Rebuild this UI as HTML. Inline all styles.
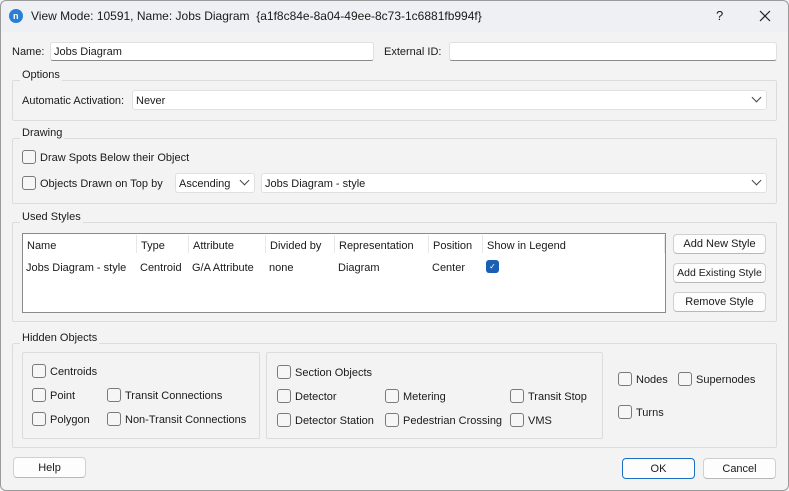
<!DOCTYPE html>
<html><head><meta charset="utf-8"><style>
*{box-sizing:border-box;margin:0;padding:0}
body{width:789px;height:491px;overflow:hidden;background:#f3f3f3;font-family:"Liberation Sans",sans-serif;font-size:11px;color:#1a1a1a;position:relative}
.a{position:absolute}
.t{position:absolute;line-height:14px;white-space:nowrap;margin-top:1px}
.in{position:absolute;background:#fff;border:1px solid #e0e0e0;border-bottom:1px solid #8a8a8a;border-radius:3px}
.g{position:absolute;border:1px solid #dcdcdc;border-radius:2px}
.gt{position:absolute;background:#f3f3f3;padding:0 2px;line-height:14px;margin-top:1px}
.cb{position:absolute;width:14px;height:14px;border:1px solid #7a7a7a;border-radius:3px;background:#f6f6f6}
.btn{position:absolute;background:#fdfdfd;border:1px solid #d0d0d0;border-bottom-color:#b8b8b8;border-radius:4px;text-align:center;line-height:20px}
.ch{position:absolute;width:7px;height:7px;border-right:1.2px solid #444;border-bottom:1.2px solid #444;transform:rotate(45deg)}
.sep{position:absolute;top:235px;width:1px;height:18px;background:#e8e8e8}
</style></head><body>
<div class="a" style="left:0;top:0;width:789px;height:32px;background:#eef0f3"></div>
<div class="a" style="left:9px;top:9px;width:14px;height:14px;border-radius:50%;background:#2a7fd4"></div>
<div class="t" style="left:13px;top:8px;color:#fff;font-size:9px;font-weight:bold">n</div>
<div class="t" style="left:31px;top:8px;font-size:12px">View Mode: 10591, Name: Jobs Diagram&nbsp; {a1f8c84e-8a04-49ee-8c73-1c6881fb994f}</div>
<div class="t" style="left:716px;top:8px;font-size:13px">?</div>
<svg class="a" style="left:759px;top:10px" width="12" height="12"><path d="M1 1L11 11M11 1L1 11" stroke="#222" stroke-width="1.2"/></svg>

<div class="t" style="left:12px;top:44px">Name:</div>
<div class="in" style="left:50px;top:42px;width:324px;height:19px"></div>
<div class="t" style="left:54px;top:44px">Jobs Diagram</div>
<div class="t" style="left:384px;top:44px">External ID:</div>
<div class="in" style="left:449px;top:42px;width:328px;height:19px"></div>

<div class="g" style="left:12px;top:80px;width:765px;height:41px"></div>
<div class="gt" style="left:20px;top:67px">Options</div>
<div class="t" style="left:22px;top:93px">Automatic Activation:</div>
<div class="in" style="left:132px;top:90px;width:635px;height:20px;border-bottom-color:#e0e0e0"></div>
<div class="t" style="left:136px;top:93px">Never</div>
<div class="ch" style="left:753px;top:94px"></div>

<div class="g" style="left:12px;top:138px;width:765px;height:66px"></div>
<div class="gt" style="left:20px;top:125px">Drawing</div>
<div class="cb" style="left:22px;top:150px"></div>
<div class="t" style="left:40px;top:150px">Draw Spots Below their Object</div>
<div class="cb" style="left:22px;top:176px"></div>
<div class="t" style="left:40px;top:176px">Objects Drawn on Top by</div>
<div class="in" style="left:175px;top:173px;width:80px;height:20px;border-bottom-color:#e0e0e0"></div>
<div class="t" style="left:179px;top:176px">Ascending</div>
<div class="ch" style="left:241px;top:177px"></div>
<div class="in" style="left:261px;top:173px;width:506px;height:20px;border-bottom-color:#e0e0e0"></div>
<div class="t" style="left:265px;top:176px">Jobs Diagram - style</div>
<div class="ch" style="left:753px;top:177px"></div>

<div class="g" style="left:12px;top:222px;width:765px;height:100px"></div>
<div class="gt" style="left:20px;top:209px">Used Styles</div>
<div class="a" style="left:22px;top:233px;width:644px;height:80px;background:#fff;border:1px solid #8a8a8a"></div>
<div class="sep" style="left:136px"></div><div class="sep" style="left:188px"></div><div class="sep" style="left:265px"></div><div class="sep" style="left:334px"></div><div class="sep" style="left:428px"></div><div class="sep" style="left:482px"></div><div class="sep" style="left:664px"></div>
<div class="t" style="left:27px;top:238px">Name</div>
<div class="t" style="left:141px;top:238px">Type</div>
<div class="t" style="left:193px;top:238px">Attribute</div>
<div class="t" style="left:270px;top:238px">Divided by</div>
<div class="t" style="left:339px;top:238px">Representation</div>
<div class="t" style="left:433px;top:238px">Position</div>
<div class="t" style="left:487px;top:238px">Show in Legend</div>
<div class="t" style="left:26px;top:260px">Jobs Diagram - style</div>
<div class="t" style="left:140px;top:260px">Centroid</div>
<div class="t" style="left:192px;top:260px">G/A Attribute</div>
<div class="t" style="left:269px;top:260px">none</div>
<div class="t" style="left:338px;top:260px">Diagram</div>
<div class="t" style="left:432px;top:260px">Center</div>
<div class="a" style="left:486px;top:260px;width:13px;height:13px;background:#1a5fb4;border-radius:3px;color:#fff;font-size:8px;text-align:center;line-height:13px">✓</div>
<div class="btn" style="left:673px;top:234px;width:93px;height:20px;line-height:18px">Add New Style</div>
<div class="btn" style="left:673px;top:263px;width:93px;height:20px;line-height:18px;font-size:10.5px">Add Existing Style</div>
<div class="btn" style="left:673px;top:292px;width:93px;height:20px;line-height:18px">Remove Style</div>

<div class="g" style="left:12px;top:343px;width:765px;height:105px"></div>
<div class="gt" style="left:20px;top:330px">Hidden Objects</div>
<div class="g" style="left:22px;top:352px;width:238px;height:87px"></div>
<div class="g" style="left:266px;top:352px;width:337px;height:87px"></div>
<div class="cb" style="left:32px;top:364px"></div><div class="t" style="left:50px;top:364px">Centroids</div>
<div class="cb" style="left:32px;top:388px"></div><div class="t" style="left:50px;top:388px">Point</div>
<div class="cb" style="left:107px;top:388px"></div><div class="t" style="left:125px;top:388px">Transit Connections</div>
<div class="cb" style="left:32px;top:412px"></div><div class="t" style="left:50px;top:412px">Polygon</div>
<div class="cb" style="left:107px;top:412px"></div><div class="t" style="left:125px;top:412px">Non-Transit Connections</div>
<div class="cb" style="left:277px;top:365px"></div><div class="t" style="left:295px;top:365px">Section Objects</div>
<div class="cb" style="left:277px;top:389px"></div><div class="t" style="left:295px;top:389px">Detector</div>
<div class="cb" style="left:385px;top:389px"></div><div class="t" style="left:403px;top:389px">Metering</div>
<div class="cb" style="left:510px;top:389px"></div><div class="t" style="left:528px;top:389px">Transit Stop</div>
<div class="cb" style="left:277px;top:413px"></div><div class="t" style="left:295px;top:413px">Detector Station</div>
<div class="cb" style="left:385px;top:413px"></div><div class="t" style="left:403px;top:413px">Pedestrian Crossing</div>
<div class="cb" style="left:510px;top:413px"></div><div class="t" style="left:528px;top:413px">VMS</div>
<div class="cb" style="left:618px;top:372px"></div><div class="t" style="left:636px;top:372px">Nodes</div>
<div class="cb" style="left:678px;top:372px"></div><div class="t" style="left:696px;top:372px">Supernodes</div>
<div class="cb" style="left:618px;top:405px"></div><div class="t" style="left:636px;top:405px">Turns</div>

<div class="btn" style="left:13px;top:457px;width:73px;height:21px">Help</div>
<div class="btn" style="left:622px;top:458px;width:73px;height:21px;border:1px solid #1a6fc4">OK</div>
<div class="btn" style="left:703px;top:458px;width:73px;height:21px">Cancel</div>
<div class="a" style="left:0;top:0;width:789px;height:491px;border:1px solid #9a9a9a;border-radius:6px;pointer-events:none"></div>
</body></html>
